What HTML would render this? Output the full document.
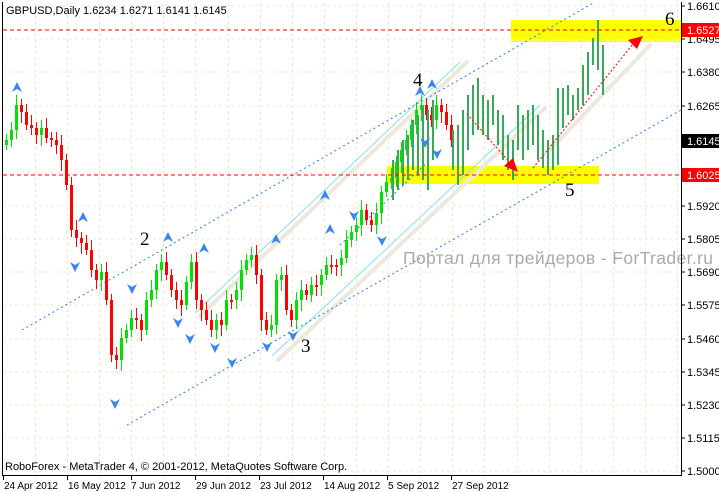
<!DOCTYPE html><html><head><meta charset="utf-8"><style>
body{margin:0;background:#fff;width:719px;height:492px;overflow:hidden;font-family:"Liberation Sans",sans-serif}
svg{display:block}
</style></head><body>
<svg id="s" width="719" height="492" xmlns="http://www.w3.org/2000/svg" font-family="Liberation Sans, DejaVu Sans, sans-serif">
<rect width="719" height="492" fill="#fff"/>
<g id="grid" stroke="#ecebd2" stroke-dasharray="3,3" stroke-width="1"></g>
<rect x="511" y="20" width="170" height="22" fill="#ffff00"/>
<rect x="387" y="166" width="212" height="18" fill="#ffff00"/>
<line x1="511" y1="40" x2="681" y2="40" stroke="#fff" stroke-dasharray="3,2"/>
<g stroke="#ece9dc" stroke-width="4" stroke-linecap="round">
<line x1="200" y1="316" x2="467" y2="62"/>
<line x1="278" y1="360" x2="545" y2="108"/>
<line x1="550" y1="150" x2="650" y2="45"/>
</g>
<g stroke="#8fdde8" stroke-width="1">
<line x1="195" y1="313" x2="460" y2="62"/>
<line x1="272" y1="356" x2="540" y2="105"/>
</g>
<g stroke="#2a7ff0" stroke-width="1" stroke-dasharray="2,3">
<line x1="22" y1="330" x2="595" y2="2"/>
<line x1="127" y1="425" x2="681" y2="110"/>
<line x1="340" y1="245" x2="430" y2="160"/>
</g>
<g id="c"></g>
<g stroke="#ff0000" stroke-dasharray="4,3"><line x1="3" y1="30" x2="681" y2="30"/><line x1="3" y1="175" x2="681" y2="175"/></g>
<g stroke="#ff2020" stroke-dasharray="2,2" stroke-width="1.2"><line x1="467" y1="114" x2="512" y2="165"/><line x1="533" y1="168" x2="633" y2="44"/></g>
<polygon points="518,172 504,166 513,158" fill="#ff0000"/>
<polygon points="643,36 628,40 637,49" fill="#ff0000"/>
<g font-family="Liberation Serif, serif" font-size="19" fill="#000">
<text x="140" y="245">2</text><text x="301" y="352">3</text><text x="413" y="86">4</text><text x="565" y="196">5</text><text x="665" y="25">6</text></g>
<text x="403" y="264" font-size="17.5" fill="#b0a8a8" textLength="310">Портал для трейдеров - ForTrader.ru</text>
<g stroke="#000" fill="none"><line x1="2.5" y1="2" x2="2.5" y2="475"/><line x1="2" y1="475.5" x2="681" y2="475.5"/><line x1="681.5" y1="2" x2="681.5" y2="476"/></g>
<g id="ax" font-size="11" fill="#000"></g>
<rect x="682" y="134" width="37" height="14" fill="#000"/><text x="687" y="145" font-size="11" fill="#fff">1.6145</text>
<rect x="682" y="168" width="37" height="14" fill="#ff0000"/><text x="687" y="179" font-size="11" fill="#fff">1.6025</text>
<rect x="682" y="23" width="37" height="14" fill="#ff0000"/><text x="687" y="34" font-size="11" fill="#fff">1.6527</text>
<text x="6" y="14" font-size="11">GBPUSD,Daily  1.6234 1.6271 1.6141 1.6145</text>
<text x="5" y="470" font-size="11">RoboForex - MetaTrader 4, © 2001-2012, MetaQuotes Software Corp.</text>
<g font-size="10" fill="#000">
<text x="4" y="489">24 Apr 2012</text><text x="68" y="489">16 May 2012</text><text x="131" y="489">7 Jun 2012</text><text x="196" y="489">29 Jun 2012</text><text x="260" y="489">23 Jul 2012</text><text x="324" y="489">14 Aug 2012</text><text x="388" y="489">5 Sep 2012</text><text x="452" y="489">27 Sep 2012</text></g>
</svg>
<script>
var ns="http://www.w3.org/2000/svg";
function el(p,t,a){var e=document.createElementNS(ns,t);for(var k in a)e.setAttribute(k,a[k]);p.appendChild(e);return e;}
var g=document.getElementById('grid'),ax=document.getElementById('ax');
var ys=[6,39,72,106,139,173,206,239,272,305,339,372,405,438,471];
var lb=["1.6610","1.6495","1.6380","1.6265","","","1.5920","1.5805","1.5690","1.5575","1.5460","1.5345","1.5230","1.5115","1.5000"];
ys.forEach(function(y,i){el(g,'line',{x1:3,y1:y,x2:681,y2:y});el(ax,'line',{x1:681,y1:y,x2:685,y2:y,stroke:'#000'});if(lb[i]){var t=el(ax,'text',{x:687,y:y+4});t.textContent=lb[i];}});
for(var x=35;x<681;x+=32.1){el(g,'line',{x1:Math.round(x)+.5,y1:3,x2:Math.round(x)+.5,y2:475});}
[3,67,131,195,259,323,387,451].forEach(function(x){el(ax,'line',{x1:x+.5,y1:475,x2:x+.5,y2:480,stroke:'#000'});});
var c=document.getElementById('c');
var pts=[[5,140],[10,130],[15,105],[20,112],[25,125],[30,128],[35,135],[40,128],[45,138],[50,140],[55,145],[60,160],[65,185],[70,230],[75,238],[80,243],[85,250],[90,270],[95,280],[100,272],[105,300],[110,355],[115,360],[120,338],[125,330],[130,318],[135,320],[140,330],[145,300],[150,290],[155,270],[160,262],[165,275],[170,290],[175,300],[180,305],[185,282],[190,262],[195,300],[200,310],[205,320],[210,330],[215,320],[220,325],[225,300],[230,300],[235,290],[240,270],[245,260],[250,255],[255,275],[260,320],[265,330],[270,325],[275,280],[280,275],[285,310],[290,320],[295,300],[300,290],[305,295],[310,285],[315,285],[320,275],[325,265],[330,265],[335,265],[340,258],[345,240],[350,232],[355,225],[360,210],[365,220],[370,225],[375,213],[380,192],[385,182],[390,178],[395,162],[400,150],[405,140],[410,125],[415,110],[420,105],[425,115],[430,120],[435,105],[440,112],[445,125],[450,140]];
var prev=145;
pts.forEach(function(p,i){var o=prev,cl=p[1];var up=cl<o;var top=Math.min(o,cl),bot=Math.max(o,cl);if(bot-top<2)bot=top+2;var col=up?'#00e000':'#ff0000';
el(c,'line',{x1:p[0]+1.5,y1:top-6-(i%3)*2,x2:p[0]+1.5,y2:bot+5+(i%4)*2,stroke:col});el(c,'rect',{x:p[0],y:top,width:3,height:bot-top,fill:col});prev=cl;});
var gb=[[392,160,200],[397,150,190],[402,140,185],[407,135,180],[412,120,170],[417,115,175],[422,105,180],[427,110,190],[432,100,160]];
gb.forEach(function(b){el(c,'rect',{x:b[0],y:b[1],width:2,height:b[2]-b[1],fill:'#3aa85c'});});
var fb=[[452,130,170],[457,125,185],[462,110,175],[467,95,150],[472,85,135],[477,78,130],[482,95,135],[487,100,140],[492,95,125],[497,110,145],[502,115,160],[507,135,170],[512,140,180],[517,105,150],[522,115,160],[527,110,150],[532,105,145],[537,115,160],[542,130,168],[547,140,175],[552,135,170],[557,88,165],[562,88,128],[567,85,115],[572,95,120],[577,88,110],[582,65,105],[587,52,95],[592,38,65],[597,20,70],[602,45,95]];
fb.forEach(function(b){el(c,'rect',{x:b[0],y:b[1],width:2,height:b[2]-b[1],fill:'#3aa85c'});});
var up=[[17,88],[83,218],[168,238],[204,249],[276,240],[330,230],[420,92],[432,85],[325,196]],dn=[[75,266],[132,288],[178,322],[190,338],[215,347],[232,362],[267,346],[293,335],[354,215],[382,240],[425,142],[437,153],[115,403]];
up.forEach(function(a){el(c,'path',{d:'M'+a[0]+','+(a[1]-6)+' l-5,10 l5,-3 l5,3z',fill:'#3a86ee'});});
dn.forEach(function(a){el(c,'path',{d:'M'+a[0]+','+(a[1]+6)+' l-5,-10 l5,3 l5,-3z',fill:'#3a86ee'});});
</script>
</body></html>
